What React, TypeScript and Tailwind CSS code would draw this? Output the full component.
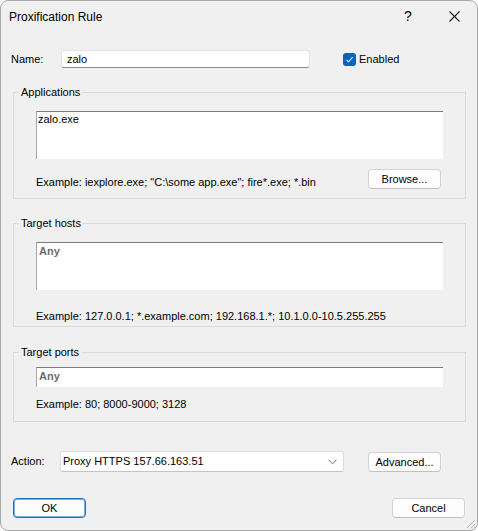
import React from "react"

function Group({ title, children, className = "" }: { title: string; children: React.ReactNode; className?: string }) {
  return (
    <fieldset className={`border border-[#dcdcdc] px-[22px] ${className}`}>
      <legend className="-ml-[17px] px-[2px] leading-[16px]">{title}</legend>
      {children}
    </fieldset>
  )
}

function Button({ label, primary = false }: { label: string; primary?: boolean }) {
  return (
    <div
      className={`w-[73px] h-[20px] flex items-center justify-center rounded-[4px] bg-[#fdfdfd] leading-[16px] ${
        primary ? "border border-[#1c6fc7] shadow-[inset_0_0_0_1px_#7eaee0]" : "border border-[#d3d3d3] border-b-[#c0c0c0]"
      }`}
    >
      {label}
    </div>
  )
}

function SunkenBox({ text, height }: { text: string; height: string }) {
  return (
    <div
      className={`${height} bg-white border-t border-l border-t-[#7c7c7c] border-l-[#a6a6a6] px-[2px] pt-[1px] leading-[15px] font-bold text-[#6d6d6d]`}
    >
      {text}
    </div>
  )
}

export default function App() {
  return (
    <div className="min-h-screen bg-white">
      <div className="relative w-[478px] h-[531px] flex flex-col rounded-[8px] border border-[#a9a9a9] bg-[#f0f0f0] overflow-hidden text-[11px] text-black font-['Liberation_Sans',sans-serif]">
        {/* title bar */}
        <div className="h-[31px] flex items-center">
          <span className="pl-[8px] flex-1 text-[12px]">Proxification Rule</span>
          <div className="w-[46px] h-full flex items-center justify-center text-[14px]">?</div>
          <div className="w-[46px] h-full flex items-center justify-center">
            <svg width="11" height="11" viewBox="0 0 11 11" stroke="#1f1f1f" strokeWidth="1.1">
              <line x1="0.5" y1="0.5" x2="10.5" y2="10.5" />
              <line x1="10.5" y1="0.5" x2="0.5" y2="10.5" />
            </svg>
          </div>
        </div>

        <div className="flex flex-col pl-[10px] pr-[10px]">
          {/* name row */}
          <div className="mt-[18px] h-[18px] flex items-center">
            <span className="w-[50px]">Name:</span>
            <div className="w-[249px] h-[18px] bg-white rounded-[3px] border border-[#e2e2e2] border-b-[#8e8e8e] pl-[5px] flex items-center">
              zalo
            </div>
            <div className="ml-[33px] w-[13px] h-[13px] rounded-[3px] bg-[#0067c0] flex items-center justify-center">
              <svg width="9" height="9" viewBox="0 0 9 9" fill="none" stroke="white" strokeWidth="1.1">
                <polyline points="1.5,4.8 3.6,6.8 7.6,2.2" />
              </svg>
            </div>
            <span className="ml-[3px]">Enabled</span>
          </div>

          <Group title="Applications" className="mt-[16px] ml-[2px] mr-[1px] pb-[8px]">
            <div className="mt-[11px] h-[48px] bg-white border-t border-l border-t-[#7c7c7c] border-l-[#a6a6a6] px-[1px] leading-[15px]">
              zalo.exe
            </div>
            <div className="mt-[10px] flex items-start">
              <span className="mt-[5px] leading-[16px]">Example: iexplore.exe; "C:\some app.exe"; fire*.exe; *.bin</span>
              <div className="ml-auto mr-[2px]">
                <Button label="Browse..." />
              </div>
            </div>
          </Group>

          <Group title="Target hosts" className="mt-[16px] ml-[2px] mr-[1px] pb-[2px]">
            <div className="mt-[11px]">
              <SunkenBox text="Any" height="h-[48px]" />
            </div>
            <div className="mt-[18px] leading-[16px]">
              Example: 127.0.0.1; *.example.com; 192.168.1.*; 10.1.0.0-10.5.255.255
            </div>
          </Group>

          <Group title="Target ports" className="mt-[17px] ml-[2px] mr-[1px] pb-[9px]">
            <div className="mt-[7px]">
              <SunkenBox text="Any" height="h-[20px]" />
            </div>
            <div className="mt-[9px] leading-[16px]">Example: 80; 8000-9000; 3128</div>
          </Group>

          {/* action row */}
          <div className="mt-[29px] flex items-center">
            <span className="w-[49px]">Action:</span>
            <div className="w-[284px] h-[21px] bg-white rounded-[3px] border border-[#dcdcdc] border-b-[#c4c4c4] pl-[2px] pr-[6px] flex items-center">
              <span className="flex-1">Proxy HTTPS 157.66.163.51</span>
              <svg width="9" height="6" viewBox="0 0 9 6" fill="none" stroke="#6a6a6a" strokeWidth="1">
                <polyline points="0.5,0.8 4.5,4.8 8.5,0.8" />
              </svg>
            </div>
            <div className="ml-[24px]">
              <Button label="Advanced..." />
            </div>
          </div>

          {/* dialog buttons */}
          <div className="mt-[26px] flex items-center justify-between pl-[2px] pr-[2px]">
            <Button label="OK" primary />
            <Button label="Cancel" />
          </div>
        </div>

        {/* size grip */}
        <svg className="absolute right-[1px] bottom-[1px]" width="12" height="12" viewBox="0 0 12 12" stroke="#b5b5b5" strokeWidth="1">
          <line x1="11" y1="3" x2="3" y2="11" />
          <line x1="11" y1="7" x2="7" y2="11" />
          <line x1="11" y1="10" x2="10" y2="11" />
        </svg>
      </div>
    </div>
  )
}
